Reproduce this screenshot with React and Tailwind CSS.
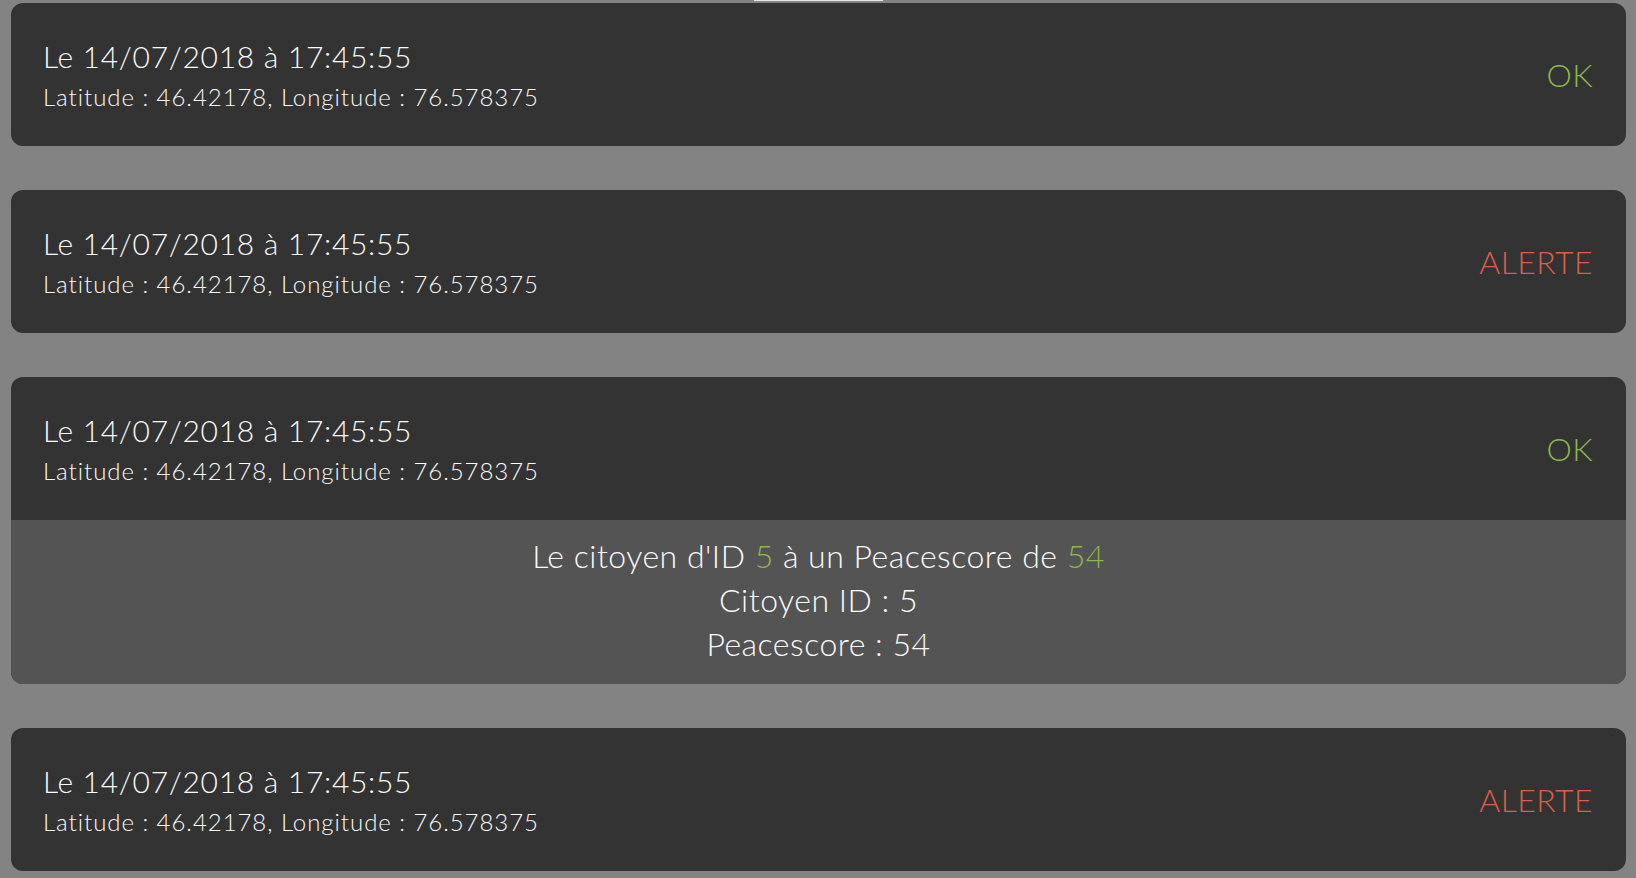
import React from "react";

const events = [
  { id: 1, date: "14/07/2018", time: "17:45:55", lat: "46.42178", lng: "76.578375", status: "OK" },
  { id: 2, date: "14/07/2018", time: "17:45:55", lat: "46.42178", lng: "76.578375", status: "ALERTE" },
  { id: 3, date: "14/07/2018", time: "17:45:55", lat: "46.42178", lng: "76.578375", status: "OK", open: true, citizen: 5, score: 54 },
  { id: 4, date: "14/07/2018", time: "17:45:55", lat: "46.42178", lng: "76.578375", status: "ALERTE" },
];

const EventCard = ({ event }) => {
  const ok = event.status === "OK";
  return (
    <div className="rounded-[12px] overflow-hidden bg-[#333333]">
      {/* Header row */}
      <div className="h-[143px] flex items-center justify-between pl-[32px] pr-[33px]">
        <div className="flex flex-col gap-[8px] text-[#fafafa]">
          <span className="text-[30px] leading-[36px] font-light tracking-[0.7px]">
            Le {event.date} à {event.time}
          </span>
          <span className="text-[24px] leading-[30px] font-light tracking-[0.95px]">
            Latitude : {event.lat}, Longitude : {event.lng}
          </span>
        </div>
        <span
          className={
            ok
              ? "text-[32px] font-light tracking-[0.4px] text-[#8cb74c]"
              : "text-[32px] font-light tracking-[0.4px] text-[#dd5f4b]"
          }
        >
          {event.status}
        </span>
      </div>

      {/* Expanded details */}
      {event.open && (
        <div className="bg-[#555455] pt-[14px] pb-[18px] text-center text-[32px] leading-[44px] font-light tracking-[0.5px] text-[#fafafa]">
          <p>
            Le citoyen d'ID <span className="text-[#8cb74c]">{event.citizen}</span> à un Peacescore de{" "}
            <span className="text-[#8cb74c]">{event.score}</span>
          </p>
          <p>Citoyen ID : {event.citizen}</p>
          <p>Peacescore : {event.score}</p>
        </div>
      )}
    </div>
  );
};

export default function App() {
  return (
    <div
      className="min-h-screen bg-[#838383] pl-[11px] pr-[10px] pb-[7px]"
      style={{ fontFamily: "Lato, 'Noto Sans', 'Liberation Sans', sans-serif" }}
    >
      <div className="h-[3px] flex justify-center">
        <div className="w-[129px] h-[1px] bg-[#e6e6e6]" />
      </div>
      <div className="flex flex-col gap-[44px]">
        {events.map((event) => (
          <EventCard key={event.id} event={event} />
        ))}
      </div>
    </div>
  );
}
